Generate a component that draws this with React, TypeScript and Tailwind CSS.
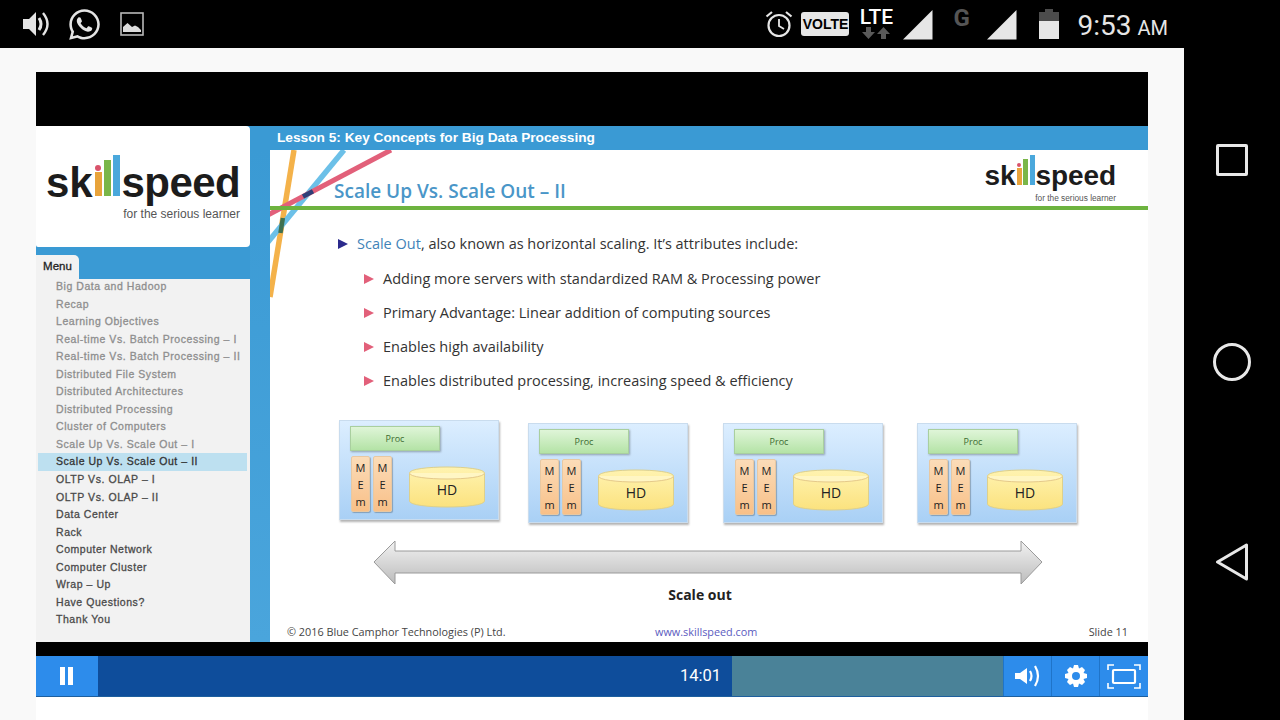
import React from 'react';
import { FaWhatsapp } from 'react-icons/fa';

const MENU: { label: string; tone: 'seen' | 'active' | 'next' }[] = [
  { label: 'Big Data and Hadoop', tone: 'seen' },
  { label: 'Recap', tone: 'seen' },
  { label: 'Learning Objectives', tone: 'seen' },
  { label: 'Real-time Vs. Batch Processing – I', tone: 'seen' },
  { label: 'Real-time Vs. Batch Processing – II', tone: 'seen' },
  { label: 'Distributed File System', tone: 'seen' },
  { label: 'Distributed Architectures', tone: 'seen' },
  { label: 'Distributed Processing', tone: 'seen' },
  { label: 'Cluster of Computers', tone: 'seen' },
  { label: 'Scale Up Vs. Scale Out – I', tone: 'seen' },
  { label: 'Scale Up Vs. Scale Out – II', tone: 'active' },
  { label: 'OLTP Vs. OLAP – I', tone: 'next' },
  { label: 'OLTP Vs. OLAP – II', tone: 'next' },
  { label: 'Data Center', tone: 'next' },
  { label: 'Rack', tone: 'next' },
  { label: 'Computer Network', tone: 'next' },
  { label: 'Computer Cluster', tone: 'next' },
  { label: 'Wrap – Up', tone: 'next' },
  { label: 'Have Questions?', tone: 'next' },
  { label: 'Thank You', tone: 'next' },
];

const POINTS = [
  'Adding more servers with standardized RAM & Processing power',
  'Primary Advantage: Linear addition of computing sources',
  'Enables high availability',
  'Enables distributed processing, increasing speed & efficiency',
];

function Signal() {
  return (
    <svg width="30" height="30" viewBox="0 0 30 30">
      <path d="M0 29.5 L29.5 0 V29.5 Z" fill="#e6e6e6" />
    </svg>
  );
}

function StatusBar() {
  return (
    <div className="h-12 flex items-center bg-black">
      <svg width="28" height="26" viewBox="0 0 28 26" className="ml-[22px]">
        <path d="M1 8 H7 L14 1 V25 L7 18 H1 Z" fill="#e4e4e4" />
        <path d="M17 7 Q21 13 17 19" fill="none" stroke="#e4e4e4" strokeWidth="3" />
        <path d="M21 2 Q30 13 21 24" fill="none" stroke="#e4e4e4" strokeWidth="2.4" />
      </svg>
      <FaWhatsapp size={35} color="#e4e4e4" className="ml-[17px]" />
      <svg width="24" height="24" viewBox="0 0 24 24" className="ml-[18px]">
        <rect x="1" y="1" width="22" height="22" fill="none" stroke="#b8b8b8" strokeWidth="1.6" />
        <path d="M3 20 V15 L7.5 11 L12 15 L15 13.5 L18 15 L21 18 V20 Z" fill="#dcdcdc" />
      </svg>
      <div className="ml-auto flex items-center">
        <svg width="28" height="28" viewBox="0 0 28 28">
          <circle cx="14" cy="15.5" r="10.5" fill="none" stroke="#e6e6e6" strokeWidth="2.2" />
          <path d="M14 9 V16 L19 19" fill="none" stroke="#e6e6e6" strokeWidth="1.8" />
          <path d="M1.5 6.5 L7 2 M26.5 6.5 L21 2" stroke="#e6e6e6" strokeWidth="2.2" />
        </svg>
        <div className="ml-[8px] w-12 h-6 rounded-[3px] bg-[#e6e6e6] text-black text-[14px] font-bold flex items-center justify-center font-['Liberation_Sans',sans-serif]">
          VOLTE
        </div>
        <div className="ml-[9px] w-[36px] flex flex-col items-center">
          <span className="text-white text-[21px] leading-[19px] font-medium font-['Roboto',sans-serif]">LTE</span>
          <svg width="28" height="13" viewBox="0 0 28 13">
            <path d="M4 0 H9 V5 H13 L6.5 12 L0 5 H4 Z M19 12 H24 V7 H28 L21.5 0 L15 7 H19 Z" fill="#5a5a5a" />
          </svg>
        </div>
        <div className="ml-[9px] -mb-[1px]"><Signal /></div>
        <span className="ml-[20px] mb-[12px] w-[18px] text-[24px] leading-none font-bold text-[#555555] font-['Roboto',sans-serif]">G</span>
        <div className="ml-[16px] -mb-[1px]"><Signal /></div>
        <svg width="20" height="30" viewBox="0 0 20 30" className="ml-[22px]">
          <path d="M6 0 H14 V3 H20 V12 H0 V3 H6 Z" fill="#4c4c4c" />
          <rect x="0" y="12" width="20" height="18" fill="#e6e6e6" />
        </svg>
        <span className="ml-[18px] mt-[3px] text-[28px] leading-none text-[#e6e6e6] font-['Roboto',sans-serif]">9:53</span>
        <span className="ml-[6px] mt-[7px] mr-4 text-[20px] leading-none text-[#e6e6e6] font-['Roboto',sans-serif]">AM</span>
      </div>
    </div>
  );
}

function Logo({ big }: { big?: boolean }) {
  const bars = big
    ? [
        { h: 'h-[24px]', c: 'bg-[#e8a33b]', dot: true },
        { h: 'h-[36px]', c: 'bg-[#7ab648]' },
        { h: 'h-[41px]', c: 'bg-[#4aa8dc]' },
      ]
    : [
        { h: 'h-[17px]', c: 'bg-[#e8a33b]', dot: true },
        { h: 'h-[26px]', c: 'bg-[#7ab648]' },
        { h: 'h-[30px]', c: 'bg-[#4aa8dc]' },
      ];
  return (
    <div className="flex flex-col items-end font-['Liberation_Sans',sans-serif]">
      <div className={`flex items-end text-[#1c1c1c] font-bold ${big ? 'h-[48px] text-[42px] leading-[42px]' : 'h-[33px] text-[28px] leading-[28px]'}`}>
        <span>sk</span>
        <div className={`flex items-end ${big ? 'gap-[2px] mx-[2px] mb-[8px]' : 'gap-[1.5px] mx-[1px] mb-[5px]'}`}>
          {bars.map((b, i) => (
            <div key={i} className="flex flex-col items-center gap-[1px]">
              {b.dot && <div className={`rounded-full bg-[#d9536b] ${big ? 'w-[6px] h-[6px]' : 'w-[4px] h-[4px]'}`} />}
              <div className={`${big ? 'w-[7px]' : 'w-[5px]'} ${b.h} ${b.c}`} />
            </div>
          ))}
        </div>
        <span className={big ? 'tracking-[-0.6px]' : 'tracking-[-0.1px]'}>speed</span>
      </div>
      <span className={`text-[#555555] ${big ? 'text-[12px] leading-[12px] mt-[4px]' : 'text-[8.3px] leading-[8px] mt-[4px]'}`}>
        for the serious learner
      </span>
    </div>
  );
}

function Sidebar() {
  return (
    <div className="w-[214px] flex flex-col font-['Liberation_Sans',sans-serif]">
      <div className="h-[121px] bg-white rounded-r-[4px] rounded-bl-[2px] flex items-start justify-end pt-[30px] pr-[10px]">
        <Logo big />
      </div>
      <div className="h-2" />
      <div className="h-6 w-[43px] bg-[#f2f2f2] rounded-tr-[5px] text-[11.5px] text-[#222222] [-webkit-text-stroke:0.3px] flex items-center justify-center">
        Menu
      </div>
      <div className="flex-1 bg-[#f2f2f2] pl-[2px] pr-[3px]">
        {MENU.map((item, i) => (
          <div
            key={item.label}
            className={`h-[17.55px] pl-[18px] text-[10.5px] leading-[17.55px] tracking-[0.55px] [-webkit-text-stroke:0.3px] whitespace-nowrap ${i === 0 ? '-mt-[1px]' : ''} ${
              item.tone === 'active'
                ? 'bg-[#bde0f0] text-[#333333]'
                : item.tone === 'seen'
                  ? 'text-[#8e8e8e]'
                  : 'text-[#4a4a4a]'
            }`}
          >
            {item.label}
          </div>
        ))}
      </div>
    </div>
  );
}

function Triangle({ color }: { color: string }) {
  return (
    <svg width="10" height="10" viewBox="0 0 10 10" className="shrink-0">
      <path d="M0 0 L10 5 L0 10 Z" fill={color} />
    </svg>
  );
}

function Server({ top, left }: { top: string; left: string }) {
  return (
    <div className={`w-40 h-[100px] pt-[5px] ${left} ${top} bg-gradient-to-b from-[#dceeff] to-[#a9d0f5] border border-[#c9dcee] shadow-[1px_2px_2px_rgba(0,0,0,0.3)]`}>
      <div className="ml-[10px] w-[90px] h-[25px] bg-gradient-to-b from-[#dff5d8] to-[#b4e3a6] border border-[#a9cf9f] shadow-[1px_1px_2px_rgba(0,0,0,0.3)] text-[9px] text-[#3c6b30] flex items-center justify-center font-['Open_Sans',sans-serif]">
        Proc
      </div>
      <div className="flex mt-[5px] ml-[11px]">
        {[0, 1].map(i => (
          <div key={i} className="w-[19px] h-14 mr-[3px] rounded-[2px] bg-gradient-to-b from-[#fbdcb8] to-[#f8c088] border border-[#e8c8a2] shadow-[1px_1px_1px_rgba(0,0,0,0.25)] flex flex-col items-center pt-[3px] gap-[2px] text-[11px] leading-[15px] text-[#222222] font-['Open_Sans',sans-serif]">
            <span>M</span>
            <span>E</span>
            <span>m</span>
          </div>
        ))}
        <div className="relative ml-[14px] mt-[10px] w-[76px] h-[42px]">
          <svg width="76" height="42" viewBox="0 0 76 42" className="absolute inset-0">
            <defs>
              <linearGradient id="cyl" x1="0" y1="0" x2="0" y2="1">
                <stop offset="0" stopColor="#fff3b0" />
                <stop offset="1" stopColor="#fbe27e" />
              </linearGradient>
            </defs>
            <path d="M0.5 7 C0.5 -1 75.5 -1 75.5 7 V35 C75.5 43 0.5 43 0.5 35 Z" fill="url(#cyl)" stroke="#ddd08c" />
            <path d="M0.5 7 C0.5 15 75.5 15 75.5 7" fill="#fff6c4" stroke="#e5c98a" />
          </svg>
          <span className="relative flex h-full items-center justify-center pt-[4px] text-[14px] text-[#222222] font-['Open_Sans',sans-serif]">HD</span>
        </div>
      </div>
    </div>
  );
}

function Slide() {
  return (
    <div className="relative flex-1 bg-white flex flex-col font-['Open_Sans',sans-serif]">
      <svg width="130" height="150" viewBox="0 0 130 150" className="absolute left-0 top-0">
        <path d="M24 0 L0 147" stroke="#f4b24a" strokeWidth="5.5" />
        <path d="M74 0 L-2 92" stroke="#6cc0e8" strokeWidth="5.5" />
        <path d="M121 0 L-2 65" stroke="#e2607a" strokeWidth="5" />
        <path d="M43 41.2 L33 46.5" stroke="#2e3f78" strokeWidth="4.5" />
        <path d="M12.9 68 L10.4 83" stroke="#3f7050" strokeWidth="4.5" />
      </svg>
      <div className="relative h-14 flex justify-between pl-16 pr-[32px]">
        <h2 className="mt-[28px] text-[19px] leading-[26px] font-semibold text-[#4a96c8]">Scale Up Vs. Scale Out – II</h2>
        <div className="mt-[7px]"><Logo /></div>
      </div>
      <div className="relative h-1 bg-[#6db33f]" />
      <div className="mt-[24px] ml-[68px] flex items-center h-5 text-[14.5px] text-[#333333]">
        <Triangle color="#2b2a8c" />
        <span className="ml-[9px]"><span className="text-[#3f83b8]">Scale Out</span>, also known as horizontal scaling. It’s attributes include:</span>
      </div>
      <div className="mt-[15px] ml-[94px] flex flex-col gap-[14px]">
        {POINTS.map(p => (
          <div key={p} className="flex items-center h-5 text-[14.5px] text-[#333333]">
            <Triangle color="#e2607a" />
            <span className="ml-[9px]">{p}</span>
          </div>
        ))}
      </div>
      <div className="flex mt-[29px] items-start">
        <Server left="ml-[69px]" top="mt-0" />
        <Server left="ml-[29px]" top="mt-[3px]" />
        <Server left="ml-[35px]" top="mt-[3px]" />
        <Server left="ml-[34px]" top="mt-[3px]" />
      </div>
      <svg width="670" height="46" viewBox="0 0 670 46" className="mt-[17px] ml-[103px]">
        <defs>
          <linearGradient id="arr" x1="0" y1="0" x2="0" y2="1">
            <stop offset="0" stopColor="#f2f2f2" />
            <stop offset="1" stopColor="#bcbcbc" />
          </linearGradient>
        </defs>
        <path d="M1 22 L22 1 V11 H648 V1 L669 22 L648 44 V33 H22 V44 Z" fill="url(#arr)" stroke="#9a9a9a" />
      </svg>
      <div className="-mt-[1px] text-center text-[14px] leading-5 font-bold text-[#222222] w-[860px]">Scale out</div>
      <div className="mt-auto mb-[2px] flex items-center h-4 text-[10.85px] text-[#444444] pl-[17px] pr-[20px]">
        <span className="w-[368px]">© 2016 Blue Camphor Technologies (P) Ltd.</span>
        <span className="text-[#5b5bc0]">www.skillspeed.com</span>
        <span className="ml-auto">Slide 11</span>
      </div>
    </div>
  );
}

function Controls() {
  return (
    <div className="h-[41px] flex bg-[#2d8ceb] border-b border-[#1d5f9e] text-white">
      <div className="w-[62px] flex items-center justify-center">
        <svg width="16" height="18" viewBox="0 0 16 18">
          <rect x="1" y="0" width="5" height="18" fill="white" />
          <rect x="9" y="0" width="5" height="18" fill="white" />
        </svg>
      </div>
      <div className="w-[634px] bg-[#0e4d9b] flex items-center justify-end pr-[11px] text-[16.5px] font-['Roboto',sans-serif]">14:01</div>
      <div className="w-[271px] bg-[#4a8298]" />
      <div className="w-12 border-l border-[#1f74c9] flex items-center justify-center">
        <svg width="26" height="22" viewBox="0 0 26 22">
          <path d="M0 8 H5 L12 3 V19 L5 14 H0 Z" fill="white" />
          <path d="M15 6 Q18 11 15 16 M20 1 Q26 11 20 21" fill="none" stroke="white" strokeWidth="2.2" />
        </svg>
      </div>
      <div className="w-12 border-l border-[#1f74c9] flex items-center justify-center">
        <svg width="24" height="24" viewBox="0 0 24 24">
          <path d="M10 1 H14 L15 4.5 L18 3 L21 6 L19.5 9 L23 10 V14 L19.5 15 L21 18 L18 21 L15 19.5 L14 23 H10 L9 19.5 L6 21 L3 18 L4.5 15 L1 14 V10 L4.5 9 L3 6 L6 3 L9 4.5 Z M12 8 A4 4 0 1 0 12 16 A4 4 0 1 0 12 8 Z" fill="white" fillRule="evenodd" />
        </svg>
      </div>
      <div className="flex-1 border-l border-[#1f74c9] flex items-center justify-center">
        <svg width="34" height="25" viewBox="0 0 34 25" fill="none" stroke="white">
          <path d="M1 6 V1 H7 M27 1 H33 V6 M33 19 V24 H27 M7 24 H1 V19" strokeWidth="1.6" />
          <rect x="6" y="6" width="22" height="13" rx="1" strokeWidth="2.2" />
        </svg>
      </div>
    </div>
  );
}

export default function App() {
  return (
    <div className="w-[1280px] h-[720px] flex bg-black overflow-hidden">
      <div className="w-[1184px] flex flex-col">
        <StatusBar />
        <main className="flex-1 bg-[#f9f9f9] pt-6 pl-9 pr-9 flex flex-col">
          <div className="w-[1112px] h-[570px] bg-black pt-[54px] flex flex-col">
            <div className="flex-1 flex bg-[#3a9ad4]">
              <Sidebar />
              <div className="flex-1 flex flex-col">
                <div className="h-6 pl-[27px] flex items-center text-[13.7px] font-bold text-white font-['Liberation_Sans',sans-serif]">
                  Lesson 5: Key Concepts for Big Data Processing
                </div>
                <div className="flex-1 flex pl-5 bg-gradient-to-b from-[#3a9ad4] to-[#4aa5dc]">
                  <Slide />
                </div>
              </div>
            </div>
          </div>
          <div className="w-[1112px] h-[14px] bg-black" />
          <div className="w-[1112px]"><Controls /></div>
          <div className="w-[1112px] flex-1 bg-white" />
        </main>
      </div>
      <nav className="flex-1 flex flex-col items-center">
        <div className="mt-[144px] w-8 h-8 border-[3px] border-[#e8e8e8] rounded-[2px]" />
        <div className="mt-[167px] w-[38px] h-[38px] border-[3px] border-[#e8e8e8] rounded-full" />
        <svg width="34" height="38" viewBox="0 0 34 38" className="mt-[162px]">
          <path d="M31.5 2 V36 L2.5 19 Z" fill="none" stroke="#e8e8e8" strokeWidth="3" strokeLinejoin="round" />
        </svg>
      </nav>
    </div>
  );
}
